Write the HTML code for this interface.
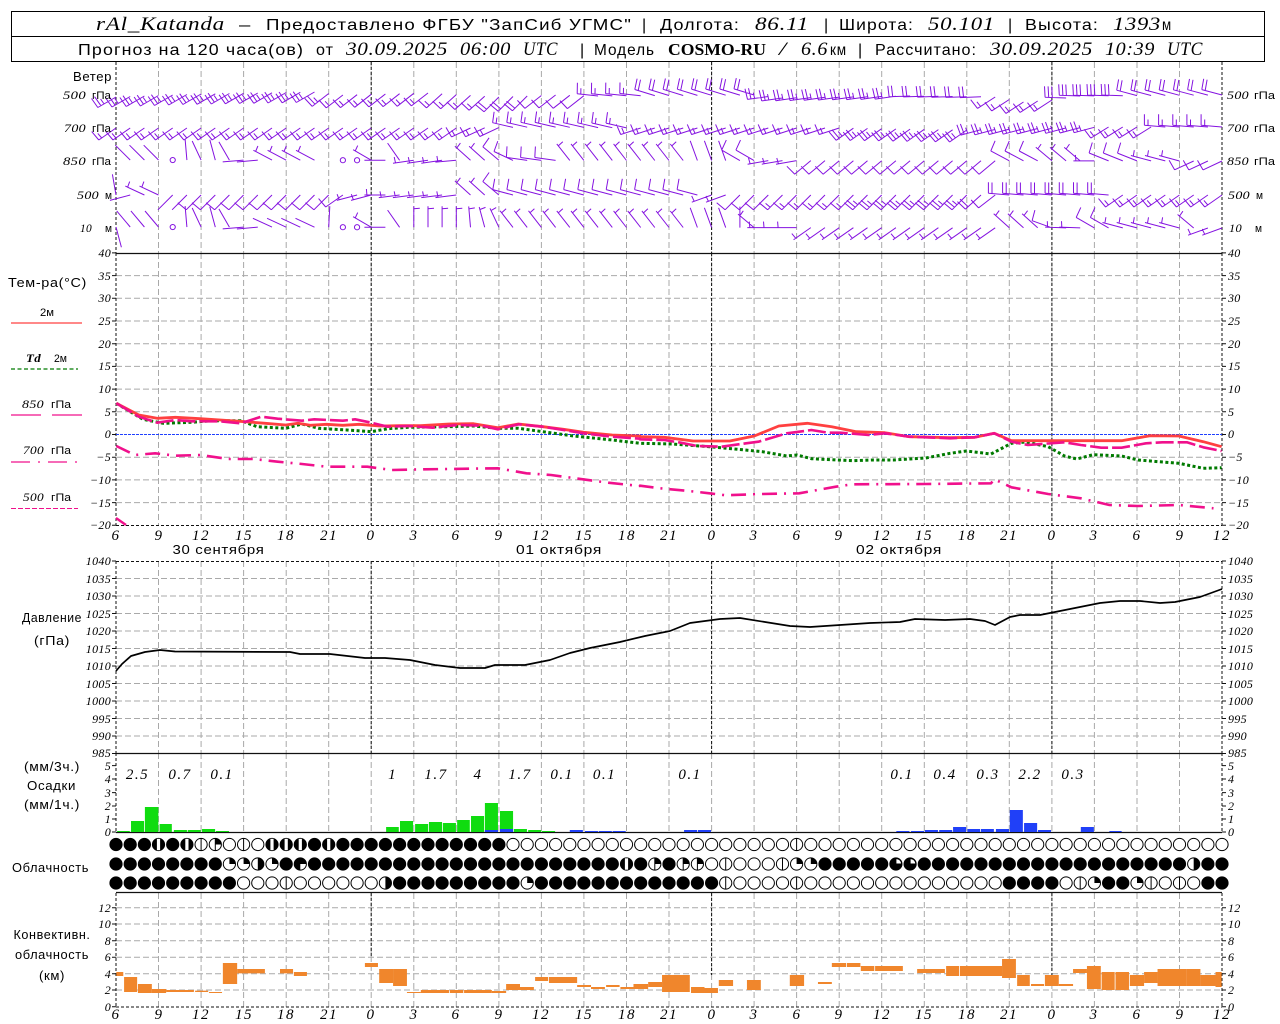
<!DOCTYPE html>
<html><head><meta charset="utf-8"><title>Meteogram</title>
<style>
html,body{margin:0;padding:0;background:#fff}
svg{display:block}
text{fill:#000;white-space:pre}
.s{font-family:"Liberation Sans",sans-serif;font-size:16px;letter-spacing:1px}
.m{font-family:"Liberation Sans",sans-serif;font-size:13px;letter-spacing:.6px}
.t{font-family:"Liberation Sans",sans-serif;font-size:11px}
.i{font-family:"Liberation Serif",serif;font-style:italic;font-size:19px;letter-spacing:.6px}
.b{font-family:"Liberation Serif",serif;font-weight:bold;font-size:17px}
.n{font-family:"Liberation Serif",serif;font-style:italic;font-size:12px;letter-spacing:.3px}
.l{text-anchor:end}
.x{font-family:"Liberation Serif",serif;font-style:italic;font-size:15px;letter-spacing:1.5px;text-anchor:middle}
.p{font-family:"Liberation Serif",serif;font-style:italic;font-size:15px;letter-spacing:1.5px;text-anchor:middle}
</style></head><body>
<svg id="c" xmlns="http://www.w3.org/2000/svg" width="1280" height="1024" viewBox="0 0 1280 1024">
<rect width="1280" height="1024" fill="#fff"/>
<g id="plot"></g>
<rect x="11.5" y="11.5" width="1253" height="50" fill="none" stroke="#000"/>
<line x1="11" y1="36.5" x2="1265" y2="36.5" stroke="#000"/>
<!-- header 1 -->
<text class="i" x="96" y="30" textLength="129" font-size="20">rAl_Katanda</text>
<text class="s" x="239" y="30" textLength="12">—</text>
<text class="s" x="266" y="30" textLength="366">Предоставлено ФГБУ "ЗапСиб УГМС"</text>
<text class="s" x="642" y="30">|</text>
<text class="s" x="660" y="30" textLength="80">Долгота:</text>
<text class="i" x="755" y="30" textLength="54">86.11</text>
<text class="s" x="824" y="30">|</text>
<text class="s" x="839" y="30" textLength="75">Широта:</text>
<text class="i" x="928" y="30" textLength="67">50.101</text>
<text class="s" x="1008" y="30">|</text>
<text class="s" x="1025" y="30" textLength="74">Высота:</text>
<text class="i" x="1113" y="30" textLength="48">1393</text>
<text class="s" x="1162" y="30" textLength="10">м</text>
<!-- header 2 -->
<text class="s" x="78" y="55" textLength="226">Прогноз на 120 часа(ов)</text>
<text class="s" x="316" y="55" textLength="18">от</text>
<text class="i" x="346" y="55" textLength="102">30.09.2025</text>
<text class="i" x="460" y="55" textLength="51">06:00</text>
<text class="i" x="523" y="55" textLength="35">UTC</text>
<text class="s" x="580" y="55">|</text>
<text class="s" x="594" y="55" textLength="61">Модель</text>
<text class="b" x="668" y="55" textLength="98">COSMO-RU</text>
<text class="i" x="779" y="55" textLength="8">/</text>
<text class="i" x="801" y="55" textLength="27">6.6</text>
<text class="s" x="830" y="55" textLength="17">км</text>
<text class="s" x="858" y="55">|</text>
<text class="s" x="875" y="55" textLength="102">Рассчитано:</text>
<text class="i" x="990" y="55" textLength="103">30.09.2025</text>
<text class="i" x="1105" y="55" textLength="50">10:39</text>
<text class="i" x="1167" y="55" textLength="36">UTC</text>
<!-- wind labels -->
<text class="m" x="73" y="81" textLength="39">Ветер</text>
<text class="n" x="63" y="99" textLength="23">500</text><text class="t" x="92" y="99" textLength="19">гПа</text>
<text class="n" x="64" y="132" textLength="22">700</text><text class="t" x="92" y="132" textLength="19">гПа</text>
<text class="n" x="63" y="165" textLength="23">850</text><text class="t" x="92" y="165" textLength="19">гПа</text>
<text class="n" x="77" y="199" textLength="22">500</text><text class="t" x="105" y="199" textLength="7">м</text>
<text class="n" x="80" y="232" textLength="12">10</text><text class="t" x="105" y="232" textLength="7">м</text>
<text class="n" x="1227" y="99" textLength="22">500</text><text class="t" x="1254" y="99" textLength="21">гПа</text>
<text class="n" x="1227" y="132" textLength="22">700</text><text class="t" x="1254" y="132" textLength="21">гПа</text>
<text class="n" x="1227" y="165" textLength="22">850</text><text class="t" x="1254" y="165" textLength="21">гПа</text>
<text class="n" x="1228" y="199" textLength="22">500</text><text class="t" x="1256" y="199" textLength="7">м</text>
<text class="n" x="1229" y="232" textLength="13">10</text><text class="t" x="1255" y="232" textLength="7">м</text>
<!-- temperature legend -->
<text class="m" x="8" y="287" textLength="79">Тем-ра(°C)</text>
<text class="t" x="40" y="316" textLength="14">2м</text>
<text class="n" x="26" y="362" textLength="15" font-weight="bold">Td</text><text class="t" x="54" y="362" textLength="13">2м</text>
<text class="n" x="22" y="408" textLength="22">850</text><text class="t" x="51" y="408" textLength="20">гПа</text>
<text class="n" x="23" y="454" textLength="21">700</text><text class="t" x="51" y="454" textLength="20">гПа</text>
<text class="n" x="23" y="501" textLength="21">500</text><text class="t" x="51" y="501" textLength="20">гПа</text>
<!-- temperature axis left -->
<g class="n l">
<text x="111" y="257">40</text><text x="111" y="280">35</text><text x="111" y="302">30</text><text x="111" y="325">25</text><text x="111" y="348">20</text><text x="111" y="370">15</text><text x="111" y="393">10</text><text x="111" y="416">5</text><text x="111" y="438">0</text><text x="111" y="461">−5</text><text x="111" y="484">−10</text><text x="111" y="507">−15</text><text x="111" y="529">−20</text>
<text x="111" y="565">1040</text><text x="111" y="583">1035</text><text x="111" y="600">1030</text><text x="111" y="618">1025</text><text x="111" y="635">1020</text><text x="111" y="653">1015</text><text x="111" y="670">1010</text><text x="111" y="688">1005</text><text x="111" y="705">1000</text><text x="111" y="723">995</text><text x="111" y="740">990</text><text x="111" y="757">985</text>
<text x="111" y="770">5</text><text x="111" y="783">4</text><text x="111" y="797">3</text><text x="111" y="810">2</text><text x="111" y="823">1</text><text x="111" y="836">0</text>
<text x="111" y="912">12</text><text x="111" y="928">10</text><text x="111" y="945">8</text><text x="111" y="961">6</text><text x="111" y="978">4</text><text x="111" y="994">2</text><text x="111" y="1011">0</text>
</g>
<g class="n">
<text x="1228" y="257">40</text><text x="1228" y="280">35</text><text x="1228" y="302">30</text><text x="1228" y="325">25</text><text x="1228" y="348">20</text><text x="1228" y="370">15</text><text x="1228" y="393">10</text><text x="1228" y="416">5</text><text x="1228" y="438">0</text><text x="1228" y="461">−5</text><text x="1228" y="484">−10</text><text x="1228" y="507">−15</text><text x="1228" y="529">−20</text>
<text x="1228" y="565">1040</text><text x="1228" y="583">1035</text><text x="1228" y="600">1030</text><text x="1228" y="618">1025</text><text x="1228" y="635">1020</text><text x="1228" y="653">1015</text><text x="1228" y="670">1010</text><text x="1228" y="688">1005</text><text x="1228" y="705">1000</text><text x="1228" y="723">995</text><text x="1228" y="740">990</text><text x="1228" y="757">985</text>
<text x="1228" y="770">5</text><text x="1228" y="783">4</text><text x="1228" y="797">3</text><text x="1228" y="810">2</text><text x="1228" y="823">1</text><text x="1228" y="836">0</text>
<text x="1228" y="912">12</text><text x="1228" y="928">10</text><text x="1228" y="945">8</text><text x="1228" y="961">6</text><text x="1228" y="978">4</text><text x="1228" y="994">2</text><text x="1228" y="1011">0</text>
</g>
<!-- x labels temp -->
<g class="x">
<text x="116" y="540">6</text><text x="159" y="540">9</text><text x="201" y="540">12</text><text x="244" y="540">15</text><text x="286" y="540">18</text><text x="329" y="540">21</text><text x="371" y="540">0</text><text x="414" y="540">3</text><text x="456" y="540">6</text><text x="499" y="540">9</text><text x="541" y="540">12</text><text x="584" y="540">15</text><text x="627" y="540">18</text><text x="669" y="540">21</text><text x="712" y="540">0</text><text x="754" y="540">3</text><text x="797" y="540">6</text><text x="839" y="540">9</text><text x="882" y="540">12</text><text x="924" y="540">15</text><text x="967" y="540">18</text><text x="1009" y="540">21</text><text x="1052" y="540">0</text><text x="1094" y="540">3</text><text x="1137" y="540">6</text><text x="1180" y="540">9</text><text x="1222" y="540">12</text>
<text x="116" y="1019">6</text><text x="159" y="1019">9</text><text x="201" y="1019">12</text><text x="244" y="1019">15</text><text x="286" y="1019">18</text><text x="329" y="1019">21</text><text x="371" y="1019">0</text><text x="414" y="1019">3</text><text x="456" y="1019">6</text><text x="499" y="1019">9</text><text x="541" y="1019">12</text><text x="584" y="1019">15</text><text x="627" y="1019">18</text><text x="669" y="1019">21</text><text x="712" y="1019">0</text><text x="754" y="1019">3</text><text x="797" y="1019">6</text><text x="839" y="1019">9</text><text x="882" y="1019">12</text><text x="924" y="1019">15</text><text x="967" y="1019">18</text><text x="1009" y="1019">21</text><text x="1052" y="1019">0</text><text x="1094" y="1019">3</text><text x="1137" y="1019">6</text><text x="1180" y="1019">9</text><text x="1222" y="1019">12</text>
</g>
<text class="m" x="172.5" y="554" textLength="92">30 сентября</text>
<text class="m" x="516" y="554" textLength="86">01 октября</text>
<text class="m" x="856" y="554" textLength="86">02 октября</text>
<!-- left labels lower -->
<text class="m" x="22" y="622" textLength="60">Давление</text>
<text class="m" x="34" y="645" textLength="36">(гПа)</text>
<text class="m" x="24" y="771" textLength="56">(мм/3ч.)</text>
<text class="m" x="27" y="790" textLength="49">Осадки</text>
<text class="m" x="24" y="809" textLength="56">(мм/1ч.)</text>
<text class="m" x="12" y="872" textLength="77">Облачность</text>
<text class="m" x="13.5" y="939" textLength="77">Конвективн.</text>
<text class="m" x="15" y="959" textLength="74">облачность</text>
<text class="m" x="39" y="980" textLength="26">(км)</text>
<!-- precip values -->
<g class="p">
<text x="137.5" y="779">2.5</text><text x="180" y="779">0.7</text><text x="222" y="779">0.1</text><text x="392.6" y="779">1</text><text x="436" y="779">1.7</text><text x="478" y="779">4</text><text x="520" y="779">1.7</text><text x="562" y="779">0.1</text><text x="604.5" y="779">0.1</text><text x="690" y="779">0.1</text><text x="902" y="779">0.1</text><text x="945" y="779">0.4</text><text x="988" y="779">0.3</text><text x="1030" y="779">2.2</text><text x="1073" y="779">0.3</text>
</g>
</svg>
<script>
(function(){
document.querySelectorAll('text[textLength]').forEach(function(t){t.setAttribute('lengthAdjust','spacingAndGlyphs')});
var NS='http://www.w3.org/2000/svg',P=document.getElementById('plot');
function el(n,a){var e=document.createElementNS(NS,n);for(var k in a)e.setAttribute(k,a[k]);P.appendChild(e);return e}
var X=function(i){return 116+14.18*i};
function line(d,s,w,da){var a={d:d,fill:'none',stroke:s,'stroke-width':w,'stroke-linejoin':'round'};if(da)a['stroke-dasharray']=da;return el('path',a)}
var GR='#a9a9a9',K='#111';
// horizontal grid
var d='',i,j;
[275.6,298.3,321,343.7,366.4,389.1,411.8,457.2,479.9,502.6].forEach(function(y){d+='M116 '+y+'H1222'});
for(i=1;i<12;i++)if(i<11)d+='M116 '+(561+i*17.5)+'H1222';
[907.7,924,940.7,957.3,973.7,990].forEach(function(y){d+='M116 '+y+'H1222'});
line(d,GR,1,'6 3');
// vertical grid
d='';
var pans=[[62,253],[253,525],[561,753],[753,832],[893,1007]];
for(i=3;i<78;i+=3){var x=X(i).toFixed(1);pans.forEach(function(p){d+='M'+x+' '+p[0]+'V'+p[1]})}
line(d,GR,1,'6 3');
// major vertical
d='';
[18,42,66].forEach(function(i){var x=X(i).toFixed(1);
 [[62,253],[253,525],[561,753]].forEach(function(p){d+='M'+x+' '+p[0]+'V'+p[1]});
 d+='M'+x+' 893V'+(i==18?957:975)});
[116,1222].forEach(function(x){[[62,253],[253,525],[561,753],[753,832],[893,1007]].forEach(function(p){d+='M'+x+' '+p[0]+'V'+p[1]})});
line(d,K,1,'3 2');
// horizontal dark dashed
line('M116 525.5H1222M116 561.5H1222M116 1007H1222',K,1,'3 2');
// solid
line('M116 253.5H1222M116 753.5H1222M116 832.5H1222M116 892.5H1222',K,1.2);
// ticks
d='';
var ty=[252.9,275.6,298.3,321,343.7,366.4,389.1,411.8,434.5,457.2,479.9,502.6,525.3,765.6,779,792.6,806,819,832,907.7,924,940.7,957.3,973.7,990,1006.7];
for(i=0;i<12;i++)ty.push(561+i*17.5);
ty.forEach(function(y){d+='M112 '+y+'H116M1222 '+y+'H1226'});
line(d,K,1);
// temp legend lines
line('M11 323H82','#ff4040',1.2);
line('M11 369H78','#007a00',1.2,'4 2.5');
line('M11 415H41M52 415H82','#f0108c',1.2);
line('M11 462H30M38 462H40M48 462H67M75 462H77','#f0108c',1.2);
line('M11 508.5H78','#f0108c',1,'5 2');
// zero line
line('M116 434.5H1222','#2040ff',1,'3 1');
// curves
function mp(L,R,y0L,y0R){var s='';L.forEach(function(p,k){s+=(k?'L':'M')+(p[0]/2.45).toFixed(1)+' '+(y0L+p[1]/3).toFixed(1)});R.forEach(function(p){s+='L'+(640+p[0]/2.45).toFixed(1)+' '+(y0R+p[1]/3).toFixed(1)});return s}
line(mp([[285,430],[350,478],[400,490],[470,487],[520,482],[590,482],[630,500],[700,505],[740,492],[780,505],[850,510],[910,515],[950,506],[1000,502],[1100,500],[1160,498],[1220,505],[1270,505],[1330,515],[1400,527],[1500,540],[1568,550]],
 [[0,190],[80,192],[170,200],[240,208],[300,215],[360,228],[385,225],[420,236],[520,242],[570,240],[620,240],[700,234],[760,220],[800,213],[860,222],[910,190],[945,186],[1000,200],[1040,228],[1070,237],[1110,224],[1180,228],[1220,240],[1320,250],[1380,265],[1425,263]],260,380),'#007a00',3,'3 2.5');
line(mp([[285,430],[340,465],[385,475],[430,472],[490,476],[540,480],[600,485],[650,490],[700,495],[730,490],[760,496],[800,493],[840,496],[880,493],[930,498],[980,497],[1030,497],[1100,492],[1160,491],[1220,503],[1270,492],[1330,500],[1380,508],[1430,517],[1500,525],[1568,528]],
 [[0,170],[60,172],[130,183],[220,183],[280,168],[340,138],[410,130],[470,140],[530,155],[600,158],[660,170],[760,173],[820,172],[868,160],[910,182],[1000,182],[1180,182],[1250,167],[1320,168],[1380,185],[1425,200]],260,380),'#ff4040',2.8);
line(mp([[285,430],[340,470],[385,488],[430,480],[470,484],[540,484],[590,490],[640,470],[680,476],[740,482],[770,478],[840,482],[870,478],[910,488],[950,500],[1000,498],[1060,503],[1120,495],[1180,497],[1220,508],[1270,493],[1330,500],[1380,510],[1430,520],[1500,530],[1568,536]],
 [[0,178],[60,180],[100,188],[140,198],[200,200],[260,190],[290,185],[360,160],[390,155],[420,150],[460,158],[490,158],[560,165],[600,160],[660,170],[760,175],[820,172],[868,160],[910,185],[950,195],[1040,187],[1080,195],[1130,203],[1180,203],[1240,190],[1280,187],[1340,187],[1380,202],[1425,213]],260,380),'#f0108c',2.6,'18 4');
line(mp([[285,558],[330,585],[380,580],[430,587],[490,585],[560,597],[620,597],[680,605],[740,612],[800,620],[900,620],[960,630],[1040,628],[1220,625],[1290,640],[1350,645],[1410,655],[1490,668],[1568,678]],
 [[0,317],[50,325],[120,333],[170,340],[210,346],[300,342],[390,340],[480,320],[520,313],[700,312],[860,310],[868,298],[910,322],[1000,342],[1080,355],[1150,375],[1220,378],[1320,375],[1405,385]],260,380),'#f0108c',2.6,'15 7 2 7');
line('M116 518L126 525','#f0108c',2.4);
// pressure
var pr=[[116,671],[122,664],[131,656],[145,652],[160,650],[175,651.5],[290,652],[300,654],[330,654],[365,658],[385,658],[410,660],[435,665],[460,668],[485,668],[495,665],[525,665],[550,660],[570,653],[590,648],[620,642],[645,636],[670,631],[690,623],[720,619],[740,618],[765,622],[790,626],[810,627],[840,625],[870,623],[900,622],[915,619],[945,620],[970,619],[985,621],[995,625],[1010,617],[1020,615],[1040,615],[1055,612],[1075,608],[1100,603],[1120,601],[1140,601],[1160,603],[1175,602],[1200,597],[1222,589]];
line('M'+pr.map(function(p){return p.join(' ')}).join('L'),'#000',1.7);
// bars
function bar(ox,oy,c,arr,bot){arr.forEach(function(a){var yb=(a.length>3?a[3]:bot);el('rect',{x:(ox+a[0]/2.45).toFixed(2),y:(oy+a[2]/3).toFixed(2),width:((a[1]-a[0])/2.45).toFixed(2),height:((yb-a[2])/3).toFixed(2),fill:c})})}
var G='#10dc10',B='#2040f8',O='#f0862c';
bar(0,750,G,[[287,318,243],[321,353,213],[355,388,171],[391,421,222],[426,458,240],[460,492,240],[495,527,237],[529,561,243],[946,977,231],[980,1012,213],[1017,1049,222],[1051,1083,216],[1085,1117,219],[1120,1151,210],[1154,1186,198],[1188,1220,159],[1225,1257,183],[1259,1291,237],[1294,1326,240],[1328,1360,243]],246);
bar(0,750,B,[[1188,1220,240],[1225,1257,237],[1396,1428,240],[1433,1465,243],[1467,1499,243],[1501,1533,243]],246);
bar(640,750,B,[[108,140,240],[142,174,240],[628,660,243],[664,696,243],[698,730,240],[733,765,240],[767,799,231],[802,833,237],[835,867,237],[872,904,237],[906,938,180],[941,973,219],[975,1007,240],[1080,1112,231],[1150,1180,243]],246);
bar(0,750,O,[[285,302,666,678],[304,336,681,726],[338,372,702,729],[372,407,717,729],[407,475,720,726],[478,510,722,726],[512,544,726,729],[546,581,639,702],[581,649,657,670],[686,718,657,670],[720,752,666,678],[894,926,639,651],[929,963,657,699],[963,997,657,708],[997,1031,726,729],[1031,1100,720,729],[1102,1135,720,729],[1137,1205,720,729],[1205,1240,723,729],[1240,1274,702,720],[1274,1308,711,720],[1311,1343,681,693],[1345,1414,681,699],[1414,1448,705,711],[1448,1482,711,717],[1485,1518,705,711],[1520,1552,711,717],[1552,1568,702,717]]);
bar(640,750,O,[[0,20,702,717],[20,54,696,711],[54,122,675,726],[125,158,711,729],[158,191,714,729],[193,228,690,708],[262,296,690,720],[367,402,675,708],[436,470,696,702],[470,505,639,651],[507,540,639,651],[541,574,648,663],[576,644,648,663],[679,747,657,669],[750,782,648,678],[784,887,648,678],[887,921,627,684],[924,955,675,708],[958,990,702,708],[992,1026,675,708],[1026,1061,702,708],[1061,1095,657,669],[1095,1129,648,717],[1131,1163,666,720],[1165,1198,666,720],[1200,1235,675,708],[1235,1268,666,699],[1268,1338,657,708],[1338,1373,657,708],[1373,1410,675,708],[1410,1425,666,711]]);
// clouds
function rp(c,n){return c.repeat(n)}
var rows=[
 [844.5,'FFFSFSVBEVESSSFS'+rp('F',12)+rp('E',20)+'V'+rp('E',30)],
 [864,rp('F',8)+'AARAFX'+rp('F',22)+'SFBFBBEVEEEVAA'+rp('F',5)+'CC'+rp('F',19)+'RFF'],
 [883,rp('F',9)+'EEEV'+rp('E',6)+'R'+rp('F',9)+'A'+rp('F',13)+'V'+rp('E',4)+'V'+rp('E',14)+rp('F',4)+'EVAFFAVEVEFF']];
var r=6.1;
rows.forEach(function(R){var y=R[0],s=R[1];for(var i=0;i<s.length;i++){var x=+X(i).toFixed(1),t=s[i];
 var f=(t=='F'||t=='S'||t=='C'||t=='X')?'#000':'#fff';
 if(t=='X')f='#fff';
 el('circle',{cx:x,cy:y,r:r,fill:f,stroke:'#000','stroke-width':1});
 var q='M'+x+' '+y;
 if(t=='S'){el('rect',{x:x-1.6,y:y-r+.4,width:3.2,height:2*r-.8,fill:'#fff'})}
 if(t=='V'||t=='B')line('M'+x+' '+(y-r)+'V'+(y+r),'#000',1);
 if(t=='A'||t=='B')el('path',{d:q+'V'+(y-r)+'A'+r+' '+r+' 0 0 1 '+(x+r)+' '+y+'Z',fill:'#000'});
 if(t=='R')el('path',{d:'M'+x+' '+(y-r)+'A'+r+' '+r+' 0 0 1 '+x+' '+(y+r)+'Z',fill:'#000'});
 if(t=='X')el('path',{d:q+'H'+(x+r)+'A'+r+' '+r+' 0 1 0 '+x+' '+(y+r)+'Z',fill:'#000'});
 if(t=='X')el('path',{d:'M'+x+' '+y+'V'+(y-r),stroke:'#000'});
 if(t=='C')el('path',{d:'M'+(x+.5)+' '+(y-.5)+'V'+(y-r+1.2)+'A'+(r-1.5)+' '+(r-1.5)+' 0 0 1 '+(x+r-1)+' '+(y-.5)+'Z',fill:'#fff'});
}});
// wind barbs
var PU='#8412e0';
function yint(t,i){for(var k=0;k<t.length-1;k++){if(i>=t[k][0]&&i<=t[k+1][0]){var u=(i-t[k][0])/(t[k+1][0]-t[k][0]);return t[k][1]+u*(t[k+1][1]-t[k][1])}}return t[t.length-1][1]}
var wr=[
 {y:[[0,97],[6,94],[14,92],[16,95],[22,93],[27,97],[31,95],[34,96],[45,95],[47,98],[56,96],[62,97],[64,102],[66,100],[68,96],[78,95]],
  s:[[0,14,240,5],[15,15,232,5],[16,22,232,3],[23,26,228,3],[27,29,225,4],[30,33,232,2],[34,37,276,3],[38,45,287,4],[46,55,262,5],[56,61,268,4],[62,66,237,3],[67,71,272,6],[72,78,285,4]]},
 {y:[[0,128],[25,128],[30,127],[37,128],[51,128],[60,130],[70,127],[78,127]],
  s:[[0,24,235,3],[25,27,245,3],[28,36,283,3],[37,51,252,3],[52,60,235,5],[61,69,255,5],[70,73,238,3],[74,78,275,3]]},
 {y:[[0,160],[78,161]],
  s:[[1,3,315,0],[4,4,0,-1],[5,5,355,0],[6,6,335,0],[7,7,345,0],[8,8,330,0],[9,10,265,0],[11,14,298,1],[16,17,0,-1],[18,18,300,1],[19,19,270,0],[20,20,325,0],[21,23,262,1],[24,24,265,1],[25,26,312,1],[27,27,310,2],[28,28,295,2],[29,31,278,2],[32,40,322,1],[41,43,340,0],[44,45,300,2],[46,48,260,1],[49,62,230,2],[63,65,298,2],[66,68,310,1],[69,69,270,1],[70,72,292,2],[73,75,285,1],[76,78,245,2]]},
 {y:[[0,195],[78,195]],
  s:[[0,0,350,0],[1,1,255,0],[2,3,295,1],[4,5,225,0],[6,15,225,2],[16,16,235,2],[17,18,255,1],[19,19,270,1],[20,24,263,1],[25,26,312,1],[27,27,310,2],[28,41,285,2],[42,43,250,1],[44,46,225,2],[47,52,225,3],[53,60,225,5],[61,61,228,4],[62,62,232,2],[63,70,275,4],[71,78,235,3]]},
 {y:[[0,227],[78,228]],
  s:[[0,0,165,0],[1,3,320,0],[4,4,0,-1],[5,5,355,0],[6,6,335,0],[7,7,345,0],[8,8,330,0],[9,10,265,0],[11,14,295,0],[15,15,3,0],[16,17,0,-1],[18,18,300,1],[19,19,270,0],[20,20,325,0],[21,24,0,1],[25,25,355,1],[26,26,345,1],[27,27,335,1],[28,40,322,1],[41,43,340,0],[44,44,0,0],[45,45,310,1],[46,48,270,1],[49,62,235,1],[63,65,312,1],[66,66,290,2],[67,68,272,1],[69,70,300,2],[71,75,285,1],[76,76,310,1],[77,78,250,1]]}
];
var dp='',L=21,ca=[];
wr.forEach(function(w){w.s.forEach(function(g){for(var i=g[0];i<=g[1];i++){
 var x=X(i),y=yint(w.y,i),f=g[3];
 if(f<0){ca.push([x,y]);continue}
 var a=g[2]*Math.PI/180,ux=Math.sin(a),uy=-Math.cos(a),ex=x+L*ux,ey=y+L*uy;
 dp+='M'+x.toFixed(1)+' '+y.toFixed(1)+'L'+ex.toFixed(1)+' '+ey.toFixed(1);
 var b=a+85*Math.PI/180,bx=Math.sin(b),by=-Math.cos(b),n=Math.floor(f/2),pos=0;
 for(var k=0;k<n;k++){var px=ex-ux*pos,py=ey-uy*pos;dp+='M'+px.toFixed(1)+' '+py.toFixed(1)+'l'+(bx*11).toFixed(1)+' '+(by*11).toFixed(1);pos+=3.6}
 if(f%2){var px=ex-ux*(pos+(n?0:2.5)),py=ey-uy*(pos+(n?0:2.5));dp+='M'+px.toFixed(1)+' '+py.toFixed(1)+'l'+(bx*6).toFixed(1)+' '+(by*6).toFixed(1)}
}})});
line(dp,PU,1);
ca.forEach(function(c){el('circle',{cx:c[0],cy:c[1],r:2.6,fill:'none',stroke:PU,'stroke-width':1})});
})();
</script>
</body></html>
